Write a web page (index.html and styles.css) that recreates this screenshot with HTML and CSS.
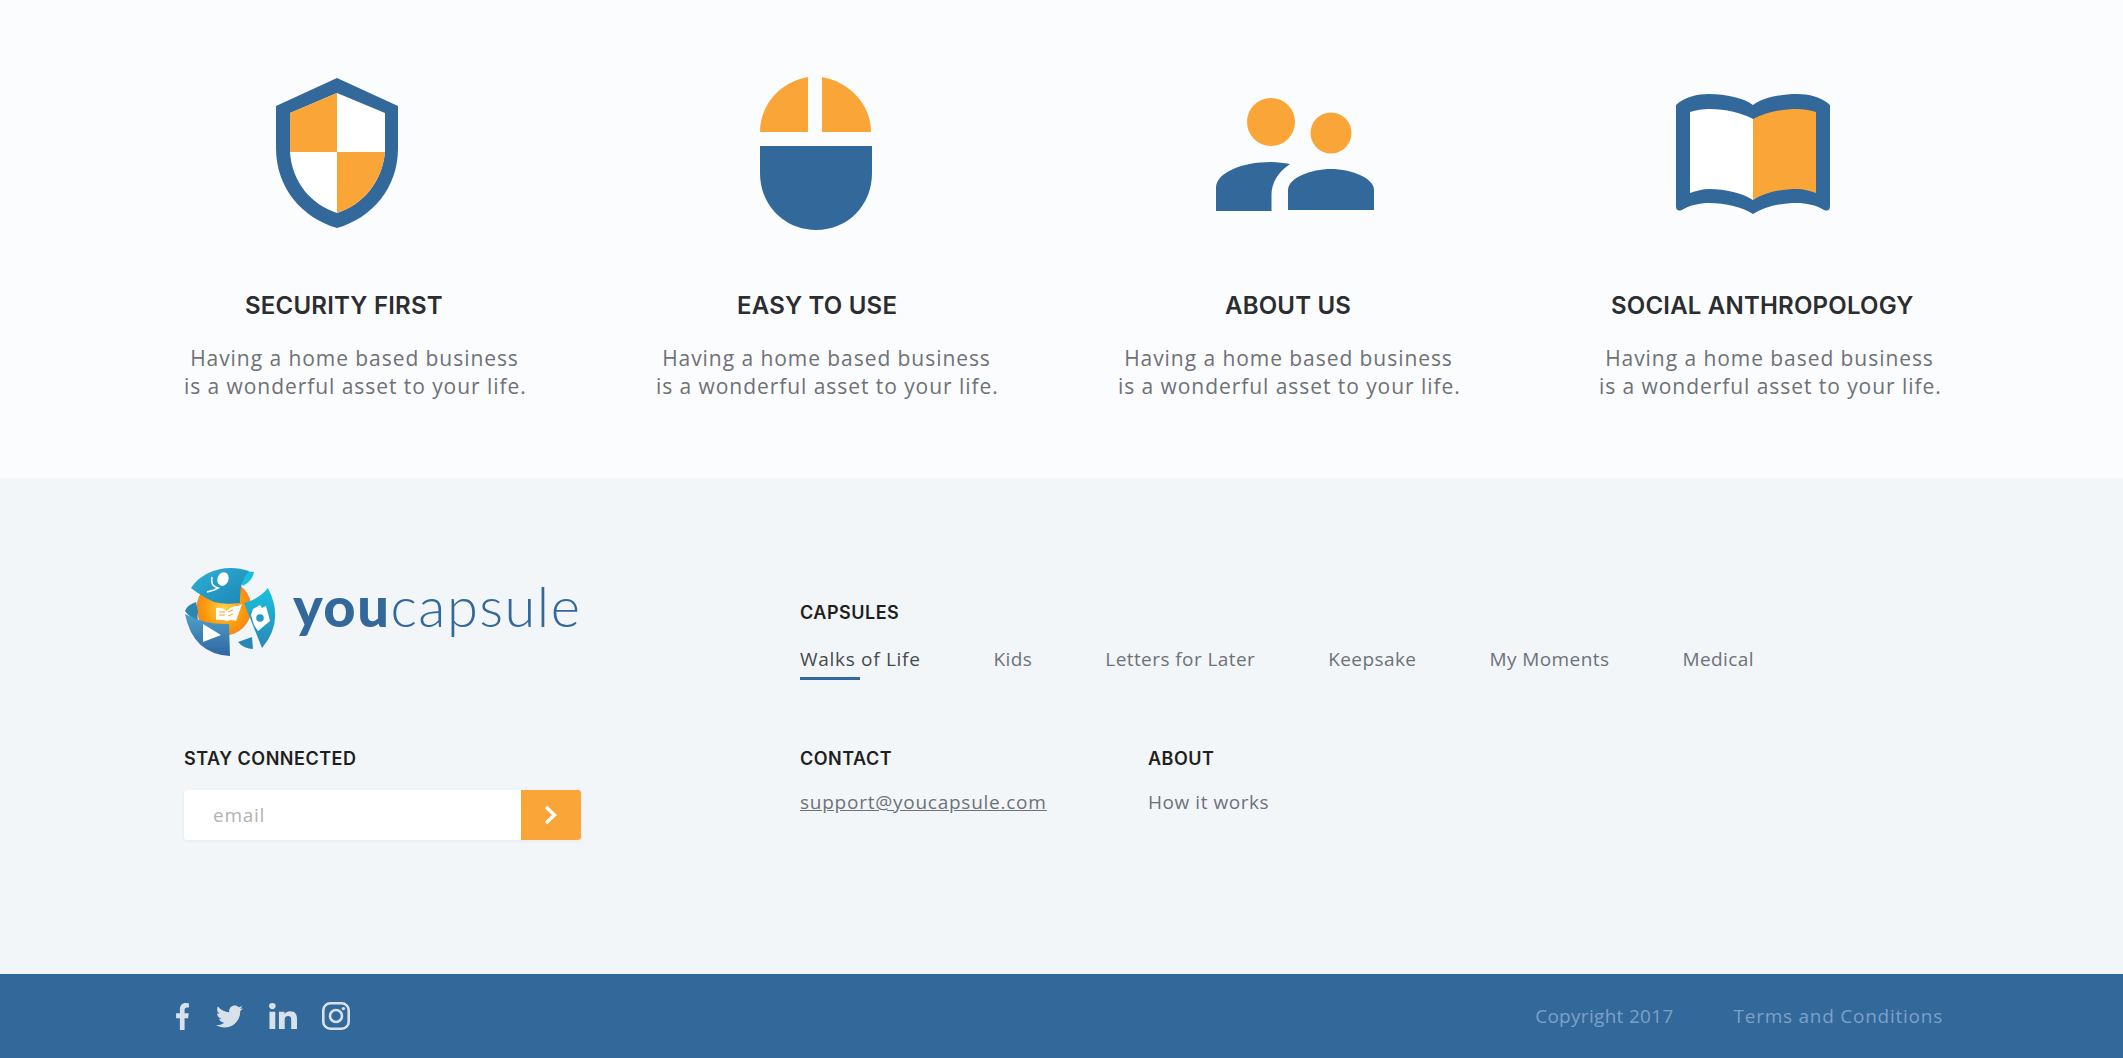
FILE: index.html
```html
<!DOCTYPE html>
<html lang="en">
<head>
<meta charset="utf-8">
<title>youcapsule</title>
<link rel="stylesheet" href="styles.css">
</head>
<body>
<section class="features">
  <article class="feature">
    <div class="icon-slot"><svg class="ic ic-shield" width="122" height="150" viewBox="0 0 122 150">
      <path class="blue" d="M61 0L122 28V70C122 110 96 140 61 150C26 140 0 110 0 70V28Z"/>
      <path class="white" d="M61 15L109 35V74C106 105 86 127 61 135C36 127 16 105 14 74V35Z"/>
      <path class="orange" d="M61 15V74H14V35Z"/>
      <path class="orange" d="M61 74H109C106 105 86 127 61 135Z"/>
    </svg></div>
    <h3 class="title t1">SECURITY FIRST</h3>
    <p class="desc">Having a home based business<br>is a wonderful asset to your life.</p>
  </article>
  <article class="feature">
    <div class="icon-slot"><svg class="ic ic-mouse" width="112" height="153" viewBox="0 0 112 153">
      <path class="orange" d="M48 0C20 5 0 28 0 55H48Z"/>
      <path class="orange" d="M62 0C90 5 111 28 111 55H62Z"/>
      <path class="blue" d="M0 69H112V96C112 128 88 153 56 153C24 153 0 128 0 96Z"/>
    </svg></div>
    <h3 class="title t2">EASY TO USE</h3>
    <p class="desc">Having a home based business<br>is a wonderful asset to your life.</p>
  </article>
  <article class="feature">
    <div class="icon-slot"><svg class="ic ic-people" width="159" height="113" viewBox="0 0 159 113">
      <circle class="orange" cx="55" cy="24" r="24"/>
      <circle class="orange" cx="115" cy="35" r="20.5"/>
      <path class="blue" d="M0 113V90C0 75 25 64 55 64C62 64 68 65 74 66C62 74 55.5 85 55.5 97V113Z"/>
      <path class="blue" d="M72 112V92C72 80 95 71 115 71C135 71 158 80 158 92V112Z"/>
    </svg></div>
    <h3 class="title t3">ABOUT US</h3>
    <p class="desc">Having a home based business<br>is a wonderful asset to your life.</p>
  </article>
  <article class="feature">
    <div class="icon-slot"><svg class="ic ic-book" width="154" height="120" viewBox="0 0 154 120">
      <path class="blue" d="M0 11C8 3 22 0 33 0C50 0 68 4 77 11C86 4 104 0 121 0C132 0 146 3 154 11V112Q154 118 148 116C140 111 130 109 121 109C104 109 88 113 77 120C66 113 50 109 33 109C24 109 14 111 6 116Q0 118 0 112Z"/>
      <path class="white" d="M14 18C20 16 27 15 33 15C50 15 66 19 77 25V106C66 99 50 95 33 95C27 95 20 97 14 99Z"/>
      <path class="orange" d="M77 25C88 19 104 15 121 15C127 15 134 16 140 18V99C134 97 127 95 121 95C104 95 88 99 77 106Z"/>
    </svg></div>
    <h3 class="title t4">SOCIAL ANTHROPOLOGY</h3>
    <p class="desc">Having a home based business<br>is a wonderful asset to your life.</p>
  </article>
</section>

<footer class="footer">
  <div class="footer-grid">
    <a class="brand" href="#">
      <svg class="brand-mark" width="92" height="92" viewBox="3 6 92 92">
        <defs>
          <radialGradient id="sun" cx="50%" cy="50%" r="50%">
            <stop offset="0" stop-color="#ffd24a"/>
            <stop offset=".7" stop-color="#fb9a0c"/>
            <stop offset="1" stop-color="#f58a1c"/>
          </radialGradient>
          <linearGradient id="band" x1="0" y1="0" x2="1" y2="1">
            <stop offset="0" stop-color="#2cb3d8"/>
            <stop offset="1" stop-color="#1f83b4"/>
          </linearGradient>
          <linearGradient id="cam" x1="0" y1="0" x2="0" y2="1">
            <stop offset="0" stop-color="#18c3de"/>
            <stop offset="1" stop-color="#2a86b8"/>
          </linearGradient>
          <linearGradient id="play" x1="0" y1="0" x2="0" y2="1">
            <stop offset="0" stop-color="#4ea0c8"/>
            <stop offset="1" stop-color="#2f66a2"/>
          </linearGradient>
        </defs>
        <circle cx="43" cy="49" r="27.5" fill="url(#sun)"/>
        <path fill="#17c1de" d="M56 17Q64 11 73 13Q72 21 62 27Z"/>
        <path fill="#2f85b2" d="M4 52Q6 46 15 43L17 52Q16 56 17 62Q8 58 4 52Z"/>
        <path fill="#2a86b4" d="M57 83L71 78L72 90Q63 90 57 83Z"/>
        <path fill="url(#band)" d="M10 29C20 13 44 4 68 12Q58 22 59 44Q44 46 33 43Q20 37 10 29Z"/>
        <path fill="url(#cam)" d="M63 44Q78 40 87 29Q104 62 81 89Z"/>
        <path fill="url(#play)" d="M4 55Q24 66 48 65L49 97Q12 95 4 55Z"/>
        <path fill="#fff" d="M22 65L40 76L22 83Z"/>
        <path fill="#fff" d="M35 49Q41 48 46 52Q50 47 57 47L61 45L55 62Q50 60 46 62Q41 60 35 61Z"/>
        <path fill="none" stroke="#f8a62a" stroke-width="1" d="M38 53H44M38 56H44M47 53L52 51M47 57L52 55"/>
        <path fill="#fff" d="M72 50L79 46L81 49L85 47L89 62L77 72L73 66L70 56Z"/>
        <circle cx="79" cy="59" r="3.8" fill="#1f9cc6"/>
        <ellipse cx="42" cy="20" rx="5.5" ry="7" transform="rotate(20 42 20)" fill="#fff"/>
        <path fill="none" stroke="#fff" stroke-width="1.6" d="M31 18Q29 27 37 29L33 31L26 33"/>
      </svg>
      <span class="brand-name"><b>you</b>capsule</span>
    </a>
    <div class="capsules">
      <h4 class="head">CAPSULES</h4>
      <nav class="capsule-nav">
        <a class="nav-link active" href="#">Walks of Life</a>
        <a class="nav-link" href="#">Kids</a>
        <a class="nav-link" href="#">Letters for Later</a>
        <a class="nav-link" href="#">Keepsake</a>
        <a class="nav-link" href="#">My Moments</a>
        <a class="nav-link" href="#">Medical</a>
      </nav>
    </div>
    <div class="stay">
      <h4 class="head">STAY CONNECTED</h4>
      <form class="subscribe">
        <span class="email">email</span>
        <span class="go"><svg width="14" height="20" viewBox="0 0 14 20"><path d="M2 2L10.5 10L2 18" fill="none" stroke="#fff" stroke-width="3.4"/></svg></span>
      </form>
    </div>
    <div class="links">
      <div class="contact">
        <h4 class="head">CONTACT</h4>
        <a class="mail" href="#">support@youcapsule.com</a>
      </div>
      <div class="about">
        <h4 class="head">ABOUT</h4>
        <a class="how" href="#">How it works</a>
      </div>
    </div>
  </div>
</footer>

<div class="bar">
  <div class="social">
    <svg class="s-f" width="15" height="27" viewBox="0 0 320 512" preserveAspectRatio="none"><path d="M279.14 288l14.22-92.66h-88.91v-60.13c0-25.35 12.42-50.06 52.24-50.06h40.42V6.26S260.43 0 225.36 0c-73.22 0-121.08 44.38-121.08 124.72v70.62H22.89V288h81.39v224h100.17V288z"/></svg>
    <svg class="s-t" width="27" height="27" viewBox="0 0 512 512"><path d="M459.37 151.716c.325 4.548.325 9.097.325 13.645 0 138.72-105.583 298.558-298.558 298.558-59.452 0-114.68-17.219-161.137-47.106 8.447.974 16.568 1.299 25.34 1.299 49.055 0 94.213-16.568 130.274-44.832-46.132-.975-84.792-31.188-98.112-72.772 6.498.974 12.995 1.624 19.818 1.624 9.421 0 18.843-1.3 27.614-3.573-48.081-9.747-84.143-51.98-84.143-102.985v-1.299c13.969 7.797 30.214 12.67 47.431 13.319-28.264-18.843-46.781-51.005-46.781-87.391 0-19.492 5.197-37.36 14.294-52.954 51.655 63.675 129.3 105.258 216.365 109.807-1.624-7.797-2.599-15.918-2.599-24.04 0-57.828 46.782-104.934 104.934-104.934 30.213 0 57.502 12.67 76.67 33.137 23.715-4.548 46.456-13.32 66.599-25.34-7.798 24.366-24.366 44.833-46.132 57.827 21.117-2.273 41.584-8.122 60.426-16.243-14.292 20.791-32.161 39.308-52.628 54.253z"/></svg>
    <svg class="s-l" width="28" height="26" viewBox="0 0 448 448" preserveAspectRatio="none"><path d="M100.28 448H7.4V148.9h92.88zM53.79 108.1C24.09 108.1 0 83.5 0 53.8a53.79 53.79 0 0 1 107.58 0c0 29.7-24.1 54.3-53.79 54.3zM447.9 448h-92.68V302.4c0-34.7-.7-79.2-48.29-79.2-48.29 0-55.69 37.7-55.69 76.7V448h-92.78V148.9h89.08v40.8h1.3c12.4-23.5 42.69-48.3 87.88-48.3 94 0 111.28 61.9 111.28 142.3V448z"/></svg>
    <svg class="s-i" width="28" height="28" viewBox="0 0 28 28"><rect class="ig" x="1.3" y="1.3" width="25.4" height="25.4" rx="7"/><circle class="ig" cx="14" cy="14" r="6"/><circle cx="21.4" cy="6.6" r="1.7"/></svg>
  </div>
  <div class="legal">
    <span class="copy">Copyright 2017</span>
    <a href="#">Terms and Conditions</a>
  </div>
</div>
</body>
</html>
```

FILE: styles.css
```css
* { box-sizing: border-box; }
html, body { margin: 0; padding: 0; }
body {
  width: 2123px;
  height: 1058px;
  overflow: hidden;
  font-family: "Open Sans", "Liberation Sans", sans-serif;
  color: #666;
}
a { color: inherit; text-decoration: none; }
h3, h4, p { margin: 0; }

.blue { fill: #33689a; }
.orange { fill: #faa537; }
.white { fill: #fff; }

.features {
  height: 478px;
  background: #fbfcfe;
  padding: 76px 0 0 184px;
  display: grid;
  grid-template-columns: 472px 462px 481px 1fr;
}
.icon-slot { height: 154px; display: flex; align-items: flex-start; }
.ic { display: block; }
.ic-shield { margin: 2px 0 0 92px; }
.ic-mouse { margin: 1px 0 0 104px; }
.ic-people { margin: 22px 0 0 98px; }
.ic-book { margin: 18px 0 0 77px; }

.title {
  margin-top: 61px;
  font: 600 24px/30px "Inter", sans-serif;
  letter-spacing: .2px;
  color: #2b2d30;
  white-space: nowrap;
}
.t1 { margin-left: 61px; }
.t2 { margin-left: 81px; }
.t3 { margin-left: 107px; }
.t4 { margin-left: 12px; }
.desc {
  margin-top: 23px;
  width: 341px;
  font-size: 21px;
  line-height: 28px;
  letter-spacing: .94px;
  text-align: center;
  color: #6e7176;
  white-space: nowrap;
}

.footer {
  height: 496px;
  background: #f3f6f9;
  padding: 88px 0 0 184px;
}
.footer-grid {
  display: grid;
  grid-template-columns: 616px 1fr;
  row-gap: 67px;
}
.brand { display: flex; align-items: center; height: 91px; }
.brand-mark { display: block; flex: none; margin-top: -2px; }
.brand-name {
  margin: -12px 0 0 17px;
  font: 300 56px/1 "Lato", sans-serif;
  letter-spacing: 1.5px;
  color: #33689a;
}
.brand-name b { font-weight: 900; }

.head {
  font: 600 18px/24px "Inter", sans-serif;
  letter-spacing: .5px;
  color: #1f1f21;
}
.capsules { padding-top: 35px; }
.capsule-nav {
  margin-top: 20px;
  display: flex;
  gap: 73px;
}
.nav-link {
  position: relative;
  font-size: 19px;
  line-height: 28px;
  letter-spacing: .42px;
  color: #6d7278;
  padding-bottom: 7px;
}
.nav-link.active { color: #45494e; letter-spacing: .7px; }
.nav-link.active::after {
  content: "";
  position: absolute;
  left: 0;
  bottom: 0;
  width: 60px;
  height: 3px;
  background: #33689a;
}

.subscribe {
  margin-top: 19px;
  width: 397px;
  height: 50px;
  display: flex;
  background: #fff;
  border-radius: 3px;
  box-shadow: 0 1px 4px rgba(0, 0, 0, .06);
  overflow: hidden;
}
.email {
  flex: 1;
  padding-left: 29px;
  font-size: 19px;
  line-height: 50px;
  letter-spacing: .75px;
  color: #b2b2b2;
}
.go {
  width: 60px;
  background: #faa537;
  display: flex;
  align-items: center;
  justify-content: center;
}
.links { display: flex; }
.contact { width: 348px; }
.mail, .how {
  display: block;
  margin-top: 17px;
  font-size: 19px;
  line-height: 28px;
  letter-spacing: .75px;
  color: #6d7278;
}
.how { letter-spacing: .55px; }
.mail { text-decoration: underline; }

.bar {
  height: 84px;
  background: #33689a;
  padding: 0 180px 0 175px;
  display: flex;
  align-items: center;
  justify-content: space-between;
}
.social { display: flex; align-items: center; }
.social svg { display: block; fill: #d7e1ea; }
.s-t { margin-left: 26px; }
.s-l { margin-left: 26px; }
.s-i { margin-left: 25px; }
.social .ig { fill: none; stroke: #d7e1ea; stroke-width: 2.6; }
.legal {
  display: flex;
  gap: 60px;
  font-size: 19px;
  letter-spacing: .75px;
  color: #7ba1c9;
}
.copy { letter-spacing: .3px; }
```
